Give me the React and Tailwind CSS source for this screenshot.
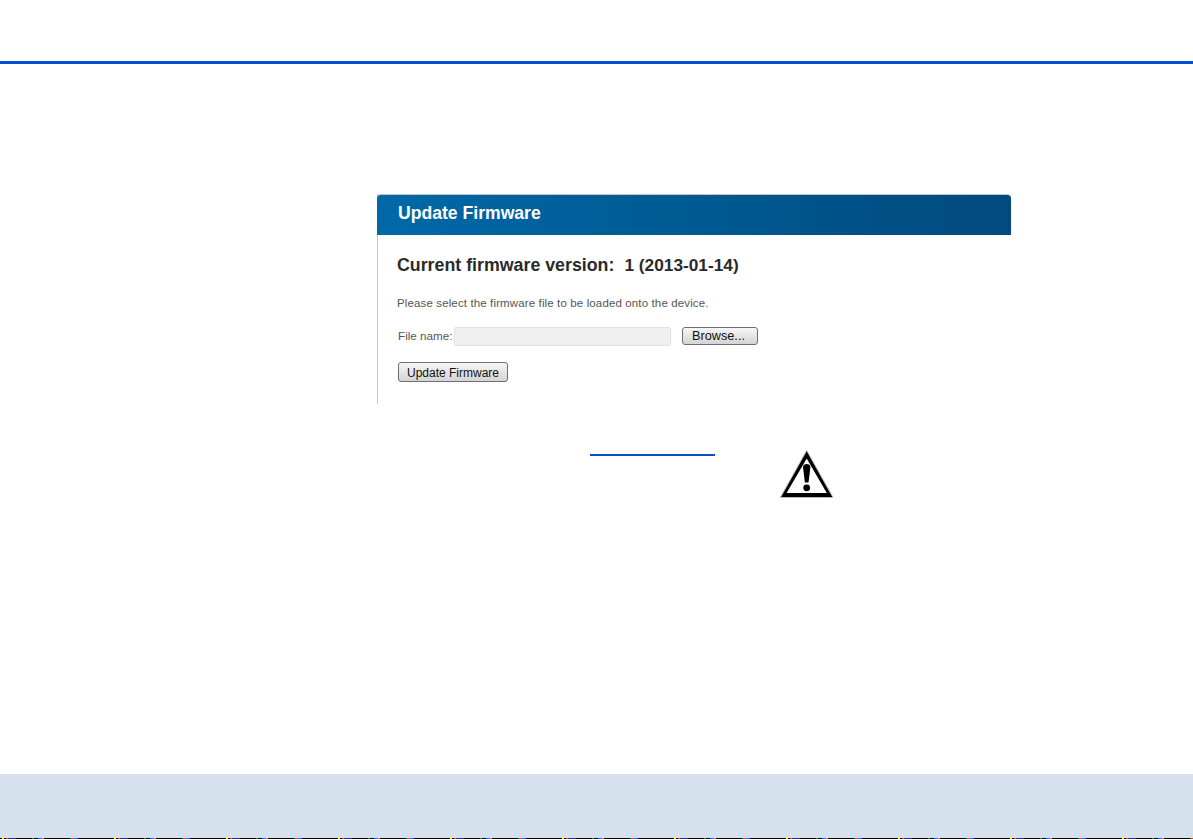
function WarningIcon() {
  return (
    <svg width="56" height="52" viewBox="0 0 56 52" className="block">
      <path d="M28.7 2.5 L55 49.5 L2.4 49.5 Z" fill="#000" stroke="#b8b8b8" strokeWidth="1" strokeLinejoin="round" />
      <path d="M28.7 10.5 L48.8 45 L8.6 45 Z" fill="#fff" />
      <path d="M25 19 C25 15 32.4 15 32.4 19 L30.5 34.5 L26.9 34.5 Z" fill="#000" />
      <circle cx="28.7" cy="39.8" r="3.4" fill="#000" />
    </svg>
  )
}

function App() {
  return (
    <div
      className="h-[839px] bg-white flex flex-col overflow-hidden"
      style={{ fontFamily: '"Liberation Sans", Arial, sans-serif' }}
    >
      <div className="h-[61px] shrink-0" />
      <div className="h-[3px] shrink-0 bg-[#004fd6]" />

      <main className="flex-1 pt-[130px] pl-[377px]">
        <section className="w-[634px] h-[210px] border-l border-[#c8c8c8]">
          <div className="h-[41px] -ml-px border-t border-[#c4c4c4] rounded-tl-[4px] rounded-tr-[4px] bg-gradient-to-r from-[#0069a8] to-[#004a7e] pl-[21px] pb-[3px] flex items-center">
            <h1 className="text-[17.6px] font-bold text-white">Update Firmware</h1>
          </div>

          <div className="pl-[19px]">
            <div className="flex items-center mt-[19px] h-[22px]">
              <h2 className="text-[17.8px] font-bold text-[#2b2b2b]">Current firmware version:</h2>
              <span className="ml-[10px] mt-[2px] text-[17.3px] font-bold text-[#2b2b2b]">1 (2013-01-14)</span>
            </div>

            <p className="mt-[20px] text-[11.5px] leading-[14px] text-[#555] tracking-[0.13px]">
              Please select the firmware file to be loaded onto the device.
            </p>

            <div className="flex items-center mt-[16px] h-[20px]">
              <label className="ml-px w-[56px] text-[11.7px] text-[#555]">File name:</label>
              <div className="w-[217px] h-[19px] bg-[#f0f0f0] border border-[#dfe3e8] rounded-[2px]" />
              <button className="ml-[11px] w-[76px] h-[18px] pr-[3px] border border-[#707070] rounded-[3px] bg-gradient-to-b from-[#f6f6f6] to-[#d4d4d4] text-[12.7px] leading-none text-[#111]">
                Browse...
              </button>
            </div>

            <button className="block mt-[16px] ml-px w-[110px] h-[20px] pt-px border border-[#707070] rounded-[3px] bg-gradient-to-b from-[#f6f6f6] to-[#d4d4d4] text-[12px] leading-none text-[#111]">
              Update Firmware
            </button>
          </div>
        </section>

        <div className="flex items-start mt-[45px]">
          <div className="ml-[213px] mt-[5px] w-[125px] h-[2px] bg-[#0a4fc8]" />
          <div className="ml-[63px] -mt-[1px]">
            <WarningIcon />
          </div>
        </div>
      </main>

      <footer className="h-[65px] shrink-0 bg-[#d5e2ee] flex flex-col justify-end">
        <div className="h-px bg-black bg-[repeating-linear-gradient(90deg,#000_0,#000_2px,#ff0_2px,#ff0_4px,#000_4px,#000_6px,#e33_6px,#e33_8px,#236_8px,#236_16px,#000_16px,#000_32px,#283_32px,#283_34px,#000_34px,#000_38px,#26e_38px,#26e_42px,#e80_42px,#e80_44px,#000_44px,#000_70px,#283_70px,#283_72px,#e33_72px,#e33_74px,#26e_74px,#26e_78px,#000_78px,#000_112px)]" />
      </footer>
    </div>
  )
}

export default App
